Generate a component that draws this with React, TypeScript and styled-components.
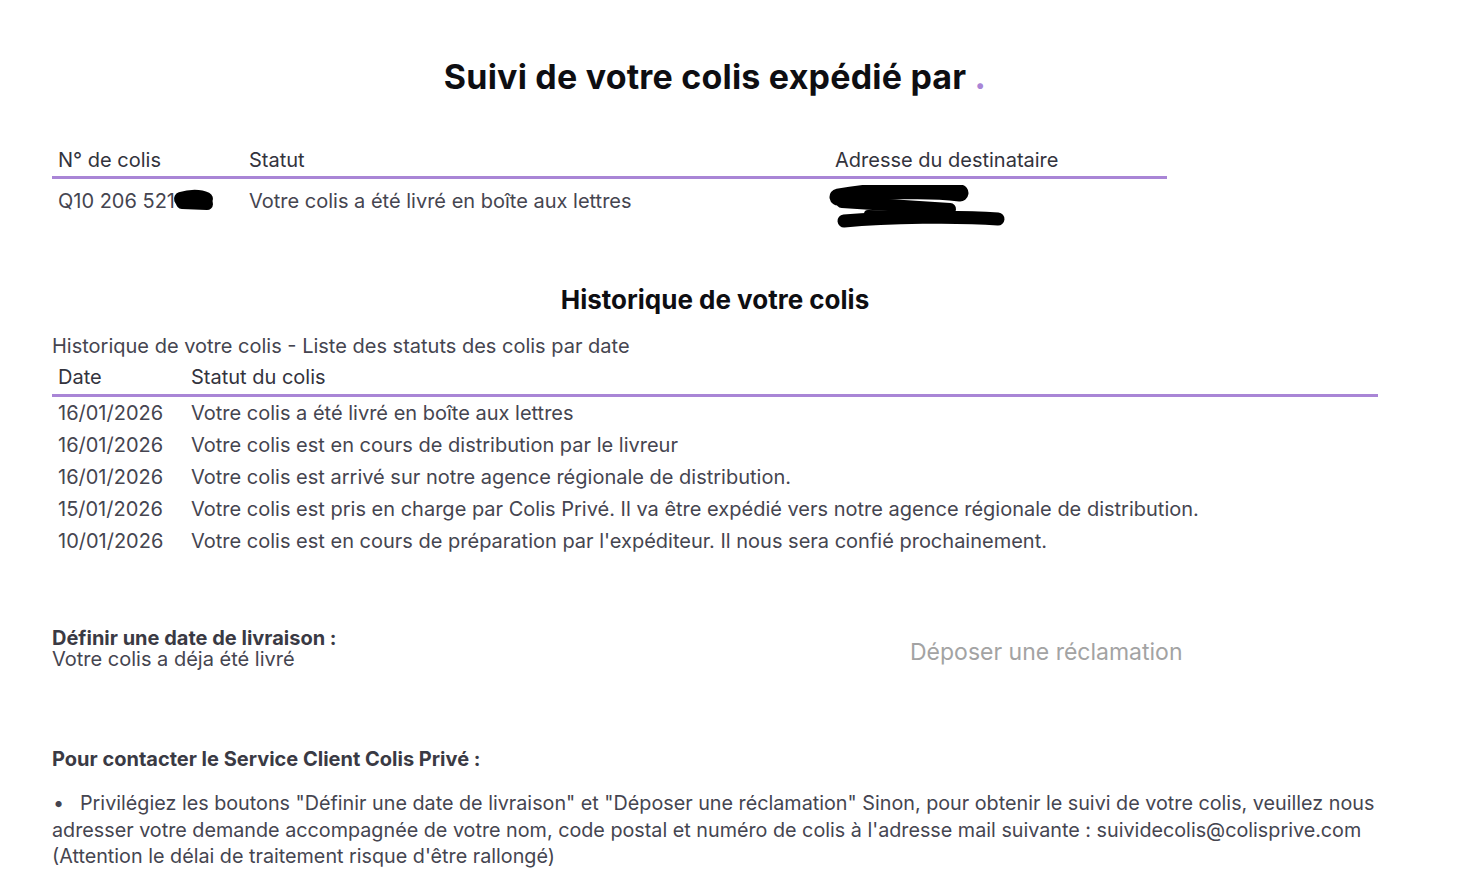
import React from 'react';
import styled, { createGlobalStyle } from 'styled-components';

const GlobalStyle = createGlobalStyle`
  body {
    margin: 0;
    background: #ffffff;
    font-family: Inter, "Liberation Sans", sans-serif;
    color: #3d3d47;
  }
`;

const PURPLE = '#a985d6';

const history = [
  { date: '16/01/2026', status: 'Votre colis a été livré en boîte aux lettres' },
  { date: '16/01/2026', status: 'Votre colis est en cours de distribution par le livreur' },
  { date: '16/01/2026', status: 'Votre colis est arrivé sur notre agence régionale de distribution.' },
  {
    date: '15/01/2026',
    status:
      'Votre colis est pris en charge par Colis Privé. Il va être expédié vers notre agence régionale de distribution.',
  },
  {
    date: '10/01/2026',
    status: "Votre colis est en cours de préparation par l'expéditeur. Il nous sera confié prochainement.",
  },
];

const Redacted: React.FC<{ kind: 'number' | 'address' }> = ({ kind }) =>
  kind === 'number' ? (
    <NumberBlot width="44" height="24" viewBox="0 0 44 24">
      <g stroke="#000" fill="none" strokeLinecap="round">
        <path d="M9 10 C 18 7, 28 7, 34 10" strokeWidth="14" />
        <path d="M10 14 L 35 15" strokeWidth="12" />
      </g>
    </NumberBlot>
  ) : (
    <AddressBlot width="182" height="48" viewBox="0 0 182 48">
      <g stroke="#000" fill="none" strokeLinecap="round">
        <path d="M10 12 C 50 5, 100 4, 132 8" strokeWidth="17" />
        <path d="M14 17 L 122 24" strokeWidth="12" />
        <path d="M16 36 C 60 32, 130 31, 170 34" strokeWidth="13" />
        <path d="M40 29 L 150 31" strokeWidth="8" />
      </g>
    </AddressBlot>
  );

const App: React.FC = () => (
  <>
    <GlobalStyle />
    <Page>
      <Title>
        Suivi de votre colis expédié par <Dot>.</Dot>
      </Title>

      <ParcelTable>
        <ParcelRow header>
          <Cell>N° de colis</Cell>
          <Cell>Statut</Cell>
          <Cell>Adresse du destinataire</Cell>
        </ParcelRow>
        <ParcelRow>
          <Cell>
            Q10 206 521
            <Redacted kind="number" />
          </Cell>
          <Cell>Votre colis a été livré en boîte aux lettres</Cell>
          <Cell>
            <Redacted kind="address" />
          </Cell>
        </ParcelRow>
      </ParcelTable>

      <SubTitle>Historique de votre colis</SubTitle>
      <Caption>Historique de votre colis - Liste des statuts des colis par date</Caption>

      <HistoryTable>
        <HistoryHead>
          <Cell>Date</Cell>
          <Cell>Statut du colis</Cell>
        </HistoryHead>
        {history.map((h, i) => (
          <HistoryRow key={i}>
            <Cell>{h.date}</Cell>
            <Cell>{h.status}</Cell>
          </HistoryRow>
        ))}
      </HistoryTable>

      <Actions>
        <DeliveryBlock>
          <Strong>Définir une date de livraison :</Strong>
          <Muted>Votre colis a déja été livré</Muted>
        </DeliveryBlock>
        <ClaimLink>Déposer une réclamation</ClaimLink>
      </Actions>

      <ContactTitle>Pour contacter le Service Client Colis Privé :</ContactTitle>
      <ContactText>
        <Bullet>•</Bullet>Privilégiez les boutons "Définir une date de livraison" et "Déposer une réclamation" Sinon,
        pour obtenir le suivi de votre colis, veuillez nous
        <br />
        adresser votre demande accompagnée de votre nom, code postal et numéro de colis à l'adresse mail suivante :
        suividecolis@colisprive.com
        <br />
        (Attention le délai de traitement risque d'être rallongé)
      </ContactText>
    </Page>
  </>
);

const Page = styled.main`
  padding: 57px 0 40px 52px;
  width: 1326px;
`;

const Title = styled.h1`
  margin: 0;
  text-align: center;
  font-size: 34px;
  line-height: 40px;
  font-weight: 700;
  color: #0e0e12;
  letter-spacing: 0.2px;
`;

const Dot = styled.span`
  color: ${PURPLE};
`;

const ParcelTable = styled.div`
  margin-top: 47px;
  width: 1115px;
`;

const ParcelRow = styled.div<{ header?: boolean }>`
  display: grid;
  grid-template-columns: 191px 586px 1fr;
  font-size: 20px;
  line-height: 24px;
  padding: ${(p) => (p.header ? '4px 0 4px' : '10px 0')};
  border-bottom: ${(p) => (p.header ? `3px solid ${PURPLE}` : 'none')};
  color: ${(p) => (p.header ? '#33333d' : '#454550')};
`;

const Cell = styled.div`
  padding-left: 6px;
  white-space: nowrap;
`;

const NumberBlot = styled.svg`
  display: inline-block;
  vertical-align: middle;
  margin: -4px 0 0 -3px;
`;

const AddressBlot = styled.svg`
  display: block;
  margin: -4px 0 0 -7px;
`;

const SubTitle = styled.h2`
  margin: 41px 0 0;
  text-align: center;
  font-size: 26px;
  line-height: 32px;
  font-weight: 700;
  color: #0e0e12;
`;

const Caption = styled.p`
  margin: 18px 0 0;
  font-size: 20px;
  line-height: 24px;
  color: #454550;
`;

const HistoryTable = styled.div`
  margin-top: 7px;
`;

const HistoryHead = styled.div`
  display: grid;
  grid-template-columns: 133px 1fr;
  font-size: 20px;
  line-height: 24px;
  padding-bottom: 5px;
  border-bottom: 3px solid ${PURPLE};
  color: #33333d;
`;

const HistoryRow = styled.div`
  display: grid;
  grid-template-columns: 133px 1fr;
  font-size: 20px;
  line-height: 32px;
  color: #454550;
  &:first-of-type {
    margin-top: -2px;
  }
`;

const Actions = styled.div`
  margin-top: 71px;
  display: grid;
  grid-template-columns: 858px auto;
  align-items: start;
`;

const DeliveryBlock = styled.div`
  display: flex;
  flex-direction: column;
  font-size: 20px;
  line-height: 21px;
`;

const Strong = styled.span`
  font-weight: 700;
  color: #3a3a44;
`;

const Muted = styled.span`
  color: #454550;
`;

const ClaimLink = styled.span`
  margin-top: 11px;
  font-size: 23px;
  line-height: 26px;
  color: #a3a3a3;
`;

const ContactTitle = styled.h3`
  margin: 77px 0 0;
  font-size: 20px;
  line-height: 24px;
  font-weight: 700;
  color: #3a3a44;
`;

const ContactText = styled.p`
  margin: 19px 0 0;
  font-size: 19.75px;
  line-height: 26.5px;
  color: #454550;
  white-space: nowrap;
`;

const Bullet = styled.span`
  display: inline-block;
  width: 27px;
  padding-left: 1px;
`;

export default App;
